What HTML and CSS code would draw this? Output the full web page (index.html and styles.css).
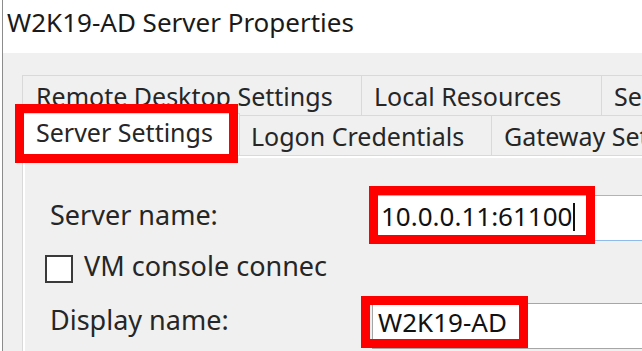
FILE: index.html
```html
<!DOCTYPE html>
<html>
<head>
<meta charset="utf-8">
<link rel="stylesheet" href="styles.css">
</head>
<body>
<div class="window">
  <div class="titlebar">W2K19-AD Server Properties</div>
  <div class="content">
    <div class="tabs">
      <div class="tabrow">
        <div class="tab t-remote">Remote Desktop Settings</div>
        <div class="tab t-local">Local Resources</div>
        <div class="tab t-se">Security</div>
      </div>
      <div class="tabrow">
        <div class="tab t-server selected">Server Settings</div>
        <div class="tab t-logon">Logon Credentials</div>
        <div class="tab t-gateway">Gateway Settings</div>
      </div>
    </div>
    <div class="panel">
      <div class="field">
        <div class="label">Server name:</div>
        <div class="edit focused">10.0.0.11:61100<span class="caret"></span></div>
      </div>
      <div class="check">
        <div class="box"></div>
        <div class="check-text">VM console connec</div>
      </div>
      <div class="field field-display">
        <div class="label">Display name:</div>
        <div class="edit plain">W2K19-AD</div>
      </div>
    </div>
  </div>
  <div class="annot a-tab"></div>
  <div class="annot a-server"></div>
  <div class="annot a-display"></div>
</div>
</body>
</html>
```

FILE: styles.css
```css
html, body {
  margin: 0;
  padding: 0;
}
body {
  width: 642px;
  height: 351px;
  overflow: hidden;
  background: #ffffff;
  font-family: "Noto Sans", "Open Sans", sans-serif;
  font-size: 26px;
  color: #262626;
}
.window {
  position: relative;
  margin-left: 2px;
  border-left: 1px solid #8c8c8c;
  height: 351px;
  background: #f0f0f0;
  overflow: hidden;
}
.titlebar {
  height: 53px;
  background: #ffffff;
  line-height: 44px;
  padding-left: 4px;
  white-space: nowrap;
  color: #1a1a1a;
}
.content {
  padding-top: 22px;
  padding-left: 19px;
}
.tabs {
  display: flex;
  flex-direction: column;
  font-size: 25px;
}
.tabrow {
  display: flex;
  height: 40px;
  white-space: nowrap;
}
.tab {
  box-sizing: border-box;
  height: 40px;
  border: 1px solid #d9d9d9;
  border-bottom: none;
  line-height: 40px;
  background: #f0f0f0;
  flex: none;
  overflow: hidden;
}
.tab + .tab {
  border-left: none;
}
.t-remote { width: 340px; padding-left: 13px; }
.t-local { width: 240px; padding-left: 12px; }
.t-se { width: 200px; padding-left: 12px; }
.t-server { width: 218px; padding-left: 13px; }
.t-logon { width: 252px; padding-left: 11px; }
.t-gateway { width: 200px; padding-left: 12px; }
.tab.selected {
  background: #ffffff;
  margin-top: -2px;
  height: 42px;
  line-height: 37px;
  position: relative;
  z-index: 1;
}
.panel {
  box-sizing: border-box;
  height: 200px;
  border-top: 1px solid #d9d9d9;
  border-left: 1px solid #d9d9d9;
  box-shadow: inset 2px 2px 0 #ffffff;
  padding-top: 39px;
}
.field {
  display: flex;
  align-items: flex-start;
  height: 46px;
}
.label {
  width: 322px;
  padding-left: 27px;
  line-height: 40px;
  flex: none;
  white-space: nowrap;
  font-size: 27px;
}
.edit {
  box-sizing: border-box;
  height: 46px;
  flex: 1;
  background: #ffffff;
  white-space: nowrap;
  color: #111;
}
.edit.focused {
  border: 1px solid #8fbbe8;
  border-right: none;
  padding-left: 8px;
  line-height: 40px;
  padding-top: 0;
}
.edit.plain {
  border: 1px solid #a6a6a6;
  border-right: none;
  padding-left: 5px;
  line-height: 34px;
  padding-top: 1px;
}
.caret {
  display: inline-block;
  width: 0;
  height: 28px;
  border-left: 2px solid #111;
  vertical-align: -5px;
  margin-left: 1px;
}
.check {
  display: flex;
  align-items: flex-start;
  margin-top: 14px;
  height: 28px;
  padding-left: 22px;
}
.box {
  box-sizing: border-box;
  width: 28px;
  height: 28px;
  border: 2px solid #3a3a3a;
  background: #ffffff;
  flex: none;
}
.check-text {
  margin-left: 11px;
  line-height: 28px;
  margin-top: -3px;
  white-space: nowrap;
  font-size: 27px;
}
.field-display {
  margin-top: 20px;
}
.field-display .label {
  line-height: 34px;
}
.annot {
  position: absolute;
  box-sizing: border-box;
  border: 9px solid #fe0000;
  z-index: 5;
}
.a-tab {
  left: 12px;
  top: 104px;
  width: 223px;
  height: 59px;
}
.a-server {
  left: 366px;
  top: 186px;
  width: 226px;
  height: 58px;
}
.a-display {
  left: 358px;
  top: 296px;
  width: 167px;
  height: 52px;
}
```
